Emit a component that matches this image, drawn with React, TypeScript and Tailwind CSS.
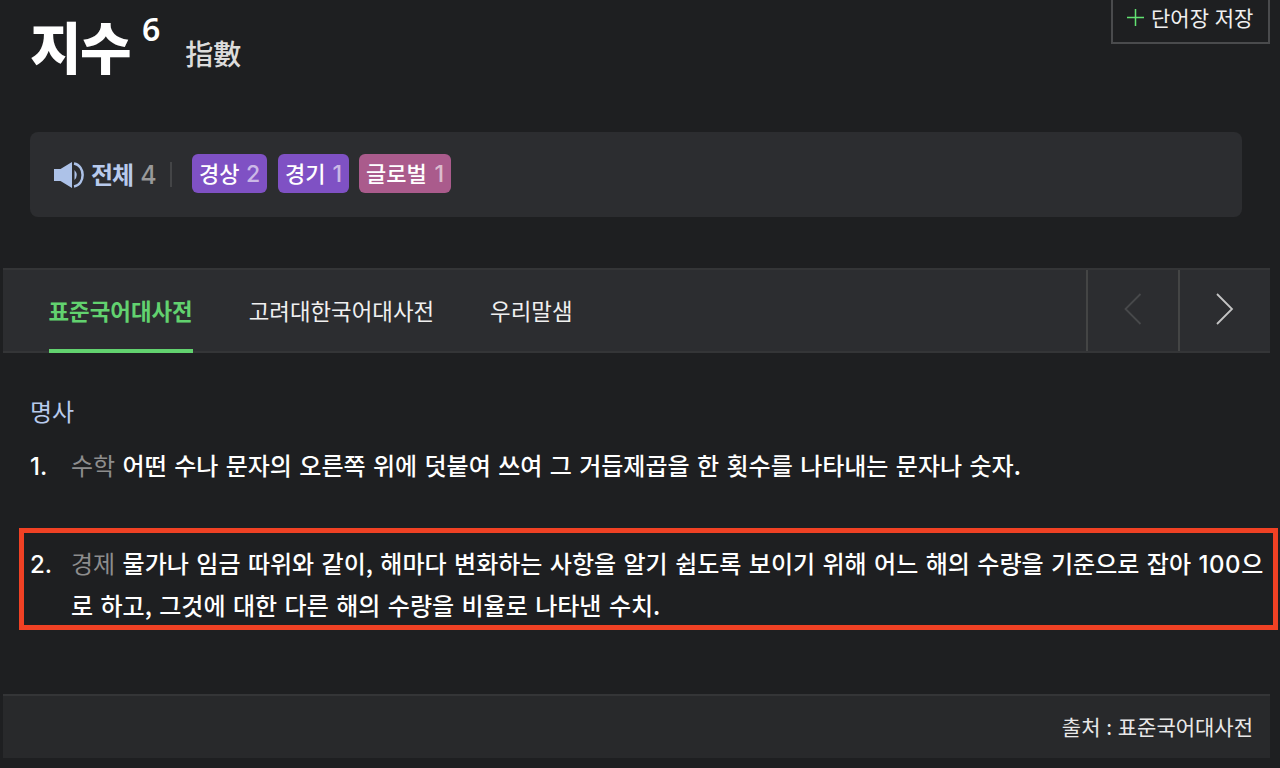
import clsx from 'clsx';

const tags = [
    { label: '경상', count: 2, className: 'w-[75px] bg-[#7f51c4]' },
    { label: '경기', count: 1, className: 'w-[71px] bg-[#7f51c4] ml-[11px]' },
    { label: '글로벌', count: 1, className: 'w-[92px] bg-[#aa5b8c] ml-[10px]' },
];

const tabs = ['표준국어대사전', '고려대한국어대사전', '우리말샘'];

function Header() {
    return (
        <header className="flex h-[132px] justify-between pl-[30px] pr-[10px]">
            <h1 className="flex items-start text-white">
                <span className="mt-[7px] text-[56px] font-black leading-[76px] tracking-[-1.5px]">지수</span>
                <sup className="top-0 ml-[12px] mt-[9px] font-['Noto_Sans'] text-[32px] font-semibold leading-[40px]">6</sup>
                <span className="ml-[25px] mt-[33px] text-[28px] font-medium leading-[40px] text-[#dcdcdc]">指數</span>
            </h1>
            <button className="flex h-[44px] w-[159px] items-center border-2 border-t-0 border-[#4a4b4d] pb-[7px] pl-[14px] text-[#f0f0f0]">
                <svg width="17" height="17" viewBox="0 0 17 17" stroke="#62e272" strokeWidth="1.5">
                    <path d="M8.5 0v17M0 8.5h17" />
                </svg>
                <span className="relative -top-px ml-[7px] whitespace-nowrap text-[21px] leading-[28px] [word-spacing:1px]">
                    단어장 저장
                </span>
            </button>
        </header>
    );
}

function Pronunciation() {
    return (
        <section className="ml-[30px] flex h-[85px] w-[1212px] items-center rounded-lg bg-[#2c2d30] pl-[23px]">
            <svg width="32" height="28" viewBox="0 0 32 28" fill="none">
                <path d="M1 8h6.5L19 1v26L7.500 20H1z" fill="#adc2e8" />
                <path d="M21.500 9Q26 14 21.500 19z" fill="#adc2e8" />
                <path d="M21 2.500c11.500 2 11.500 21 0 23" stroke="#adc2e8" strokeWidth="2.500" />
            </svg>
            <span className="mb-[2px] ml-[6px] text-[24px] font-bold leading-[30px] tracking-[-1px] text-[#b8caec]">전체</span>
            <span className="ml-[7px] font-['Inter'] text-[25px] font-medium leading-8 tracking-[-0.5px] text-[#999999]">4</span>
            <span className="ml-[14px] h-[25px] w-[2px] bg-[#444547]" />
            <div className="mb-[2px] ml-[20px] flex">
                {tags.map((tag) => (
                    <button
                        key={tag.label}
                        className={clsx(
                            'flex h-[39px] items-center justify-between rounded-md px-[7px] text-[22px] text-white',
                            tag.className
                        )}
                    >
                        <span className="mb-[2px] font-medium">{tag.label}</span>
                        <span className="mt-[2px] font-['Inter'] text-[23px] font-medium text-white/60">{tag.count}</span>
                    </button>
                ))}
            </div>
        </section>
    );
}

function Tabs() {
    return (
        <nav className="ml-[3px] mt-[51px] flex h-[85px] w-[1267px] border-y-2 border-[#343537] bg-[#2c2d30]">
            <ul className="flex flex-1 gap-[56px] pl-[45.5px]">
                {tabs.map((tab, index) => (
                    <li
                        key={tab}
                        className={clsx(
                            'h-[83px] whitespace-nowrap pt-[23px] text-[22.4px] leading-[34px]',
                            index === 0
                                ? 'border-b-4 border-[#62d26f] font-bold text-[#62d26f]'
                                : 'text-[#f0f0f0]'
                        )}
                    >
                        {tab}
                    </li>
                ))}
            </ul>
            <button className="flex w-[92px] justify-center border-l-2 border-[#444545] pt-[23px]">
                <svg width="18" height="32" viewBox="0 0 18 32" fill="none" stroke="#48494b" strokeWidth="1.8">
                    <path d="M16.5 1L1.500 16l15 15" />
                </svg>
            </button>
            <button className="flex w-[92px] justify-center border-l-2 border-[#444545] pt-[23px]">
                <svg width="18" height="32" viewBox="0 0 18 32" fill="none" stroke="#c4c4c4" strokeWidth="1.8">
                    <path d="M1 1l15 15L1 31" />
                </svg>
            </button>
        </nav>
    );
}

function Meanings() {
    return (
        <main className="h-[341px] pt-[38px]">
            <h2 className="ml-[30px] text-[24px] leading-[40px] text-[#b8caec]">명사</h2>
            <ol className="text-[24px] font-medium leading-[42px] text-white">
                <li className="mt-[13px] flex pl-[30px]">
                    <span className="w-[41px] pt-[2px] font-['Inter']">1.</span>
                    <p className="whitespace-nowrap [word-spacing:2px]">
                        <span className="font-normal text-[#8d8d8d]">수학</span> 어떤 수나 문자의 오른쪽 위에 덧붙여
                        쓰여 그 거듭제곱을 한 횟수를 나타내는 문자나 숫자.
                    </p>
                </li>
                <li className="ml-[19px] mt-[40px] flex h-[102px] w-[1259px] border-[5px] border-[#f04124] pl-[6px] pt-[9px]">
                    <span className="w-[41px] pt-[2px] font-['Inter']">2.</span>
                    <p className="whitespace-nowrap [word-spacing:2.050px]">
                        <span className="font-normal text-[#8d8d8d]">경제</span> 물가나 임금 따위와 같이, 해마다 변화하는
                        사항을 알기 쉽도록 보이기 위해 어느 해의 수량을 기준으로 잡아{' '}
                        <span className="font-['Inter'] leading-none tracking-[0.6px]">100</span>으
                        <br />로 하고, 그것에 대한 다른 해의 수량을 비율로 나타낸 수치.
                    </p>
                </li>
            </ol>
        </main>
    );
}

export default function App() {
    return (
        <div className="h-[768px] w-[1280px] overflow-hidden bg-[#1e1f21] font-['Noto_Sans_CJK_KR',sans-serif]">
            <Header />
            <Pronunciation />
            <Tabs />
            <Meanings />
            <footer className="ml-[3px] flex h-[64px] w-[1267px] justify-end border-t-2 border-[#343537] bg-[#28292b] pr-[17px] pt-[13px] text-[21px] leading-[34px] text-[#e8e8e8] [word-spacing:1px]">
                출처 : 표준국어대사전
            </footer>
        </div>
    );
}
